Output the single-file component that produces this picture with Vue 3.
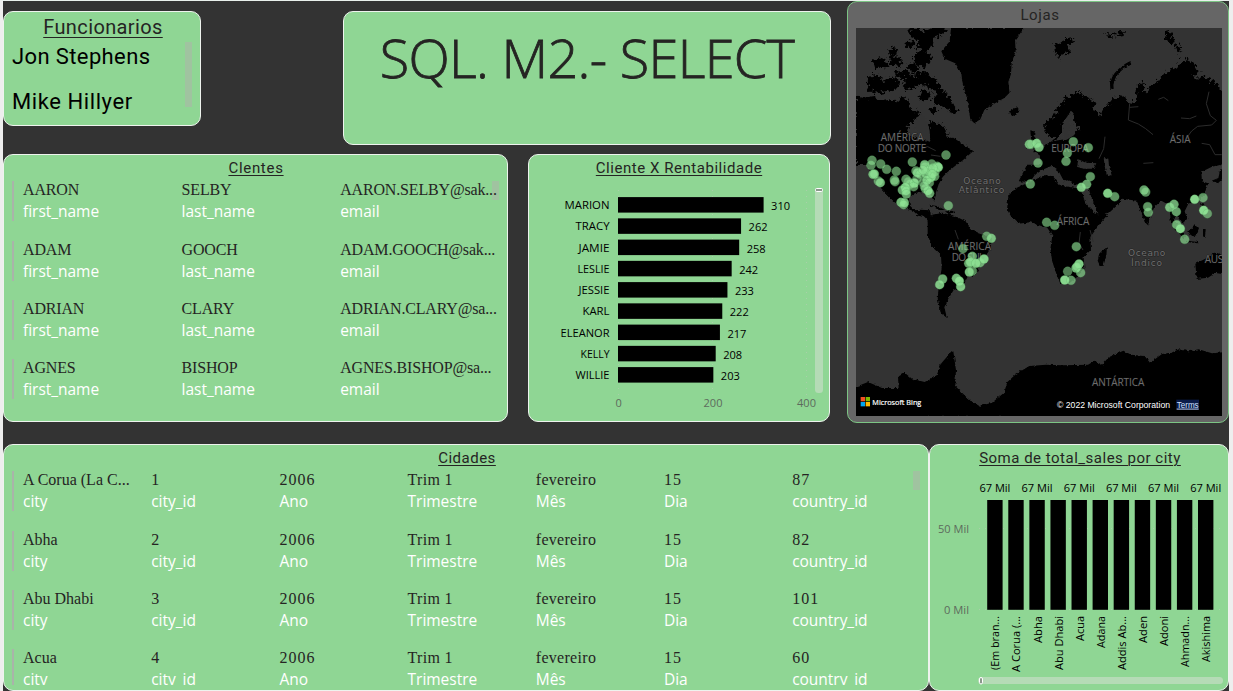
<script setup>
const clients = [
  ['AARON', 'SELBY', 'AARON.SELBY@sak...'],
  ['ADAM', 'GOOCH', 'ADAM.GOOCH@sak...'],
  ['ADRIAN', 'CLARY', 'ADRIAN.CLARY@sa...'],
  ['AGNES', 'BISHOP', 'AGNES.BISHOP@sa...'],
]
const clientFields = ['first_name', 'last_name', 'email']

const cityFields = ['city', 'city_id', 'Ano', 'Trimestre', 'Mês', 'Dia', 'country_id']
const cities = [
  ['A Corua (La C...', '1', '87'],
  ['Abha', '2', '82'],
  ['Abu Dhabi', '3', '101'],
  ['Acua', '4', '60'],
].map(([city, id, country]) => [city, id, '2006', 'Trim 1', 'fevereiro', '15', country])

// label, value, rendered width of the label
const customers = [
  ['MARION', 310, 45],
  ['TRACY', 262, 34],
  ['JAMIE', 258, 31],
  ['LESLIE', 242, 32],
  ['JESSIE', 233, 31],
  ['KARL', 222, 27],
  ['ELEANOR', 217, 49],
  ['KELLY', 208, 29],
  ['WILLIE', 203, 34],
].map(([name, value, w], i) => ({ name, value, w, y: 197.1 + i * 21.25, len: value * 0.4697 }))

const sales = [
  ['(Em bran...', 54],
  ['A Corua (...', 56],
  ['Abha', 27],
  ['Abu Dhabi', 54],
  ['Acua', 25],
  ['Adana', 32],
  ['Addis Ab...', 54],
  ['Aden', 27],
  ['Adoni', 30],
  ['Ahmadn...', 51],
  ['Akishima', 46],
].map(([name, w], i) => ({ name, w, x: 987.2 + i * 21.08, labelled: i % 2 === 0 }))

// Store positions in map units; third value is opacity
const stores = [
  [81, 481, 0.6], [78, 496, 0.6], [107, 492, 0.6], [125, 508, 0.6], [154, 514, 0.6], [202, 486, 0.6],
  [84, 523, 0.8], [88, 522, 0.8], [100, 543, 0.6], [106, 548, 0.8], [148, 540, 0.6], [150, 545, 0.6],
  [183, 538, 0.6], [213, 513, 0.6], [217, 518, 0.8], [239, 494, 0.8], [240, 500, 0.6], [260, 492, 0.6],
  [277, 499, 0.6], [280, 502, 0.9], [270, 515, 0.6], [255, 508, 0.6], [242, 520, 0.7], [226, 522, 0.6],
  [258, 532, 0.9], [269, 529, 0.6], [246, 540, 0.8], [235, 548, 0.5], [253, 548, 0.6], [208, 549, 0.9],
  [196, 552, 0.6], [190, 545, 0.5], [206, 560, 0.6], [181, 562, 0.9], [172, 570, 0.7], [183, 572, 0.8],
  [184, 582, 0.7], [241, 566, 0.6], [249, 572, 0.9], [254, 580, 0.7], [238, 558, 0.5], [168, 607, 0.8],
  [178, 608, 0.8], [176, 614, 0.6], [248, 512, 0.6], [264, 504, 0.6], [234, 510, 0.6], [262, 522, 0.6],
  [216, 536, 0.5], [303, 465, 0.6], [310, 617, 0.65], [553, 433, 0.8], [559, 433, 0.5],
  [575, 430, 0.9], [582, 442, 0.8], [579, 489, 0.65], [556, 552, 0.65], [685, 425, 0.65], [730, 443, 0.65],
  [667, 459, 0.65], [663, 484, 0.65], [736, 530, 0.65], [725, 553, 0.7], [709, 562, 0.85], [788, 580, 0.9],
  [809, 590, 0.65], [897, 570, 0.7], [902, 576, 0.6], [908, 620, 0.65], [910, 637, 0.65], [974, 622, 0.8],
  [987, 613, 0.75], [994, 635, 0.7], [1049, 598, 0.95], [1074, 593, 0.65], [1076, 631, 0.95], [1087, 641, 0.6],
  [995, 674, 0.75], [1006, 686, 0.95], [1019, 718, 0.65], [605, 667, 0.6], [629, 676, 0.6], [694, 740, 0.65],
  [693, 804, 0.8], [702, 792, 0.9], [696, 800, 0.6], [668, 814, 0.55], [707, 818, 0.65], [659, 840, 0.95],
  [678, 841, 0.65], [425, 709, 0.6], [439, 715, 0.8], [354, 746, 0.6], [382, 769, 0.7], [371, 790, 0.7],
  [376, 786, 0.8], [405, 788, 0.7], [393, 790, 0.9], [417, 777, 0.9], [382, 813, 0.6], [373, 816, 0.85],
  [293, 837, 0.75], [284, 854, 0.85], [334, 835, 0.8], [343, 843, 0.95], [347, 860, 0.85],
]
</script>

<template>
  <main class="report">
    <section class="upper">
      <div class="left">
        <div class="head-row">
          <article class="card staff">
            <h2>Funcionarios</h2>
            <div class="staff-body">
              <ul>
                <li class="n1">Jon Stephens</li>
                <li class="n2">Mike Hillyer</li>
              </ul>
              <i class="thumb"></i>
            </div>
          </article>
          <article class="card banner"><h1>SQL. M2.- SELECT</h1></article>
        </div>
        <div class="mid-row">
          <article class="card clients">
            <h3 class="t-cl">Clentes</h3>
            <div class="scroll">
              <div v-for="row in clients" :key="row[0]" class="record rec3">
                <div v-for="(v, i) in row" :key="i" class="cell">
                  <b>{{ v }}</b><span>{{ clientFields[i] }}</span>
                </div>
              </div>
              <i class="thumb"></i>
            </div>
          </article>
          <article class="card chart">
            <h3 class="t-cr">Cliente X Rentabilidade</h3>
            <svg class="plot" viewBox="529 180 300 240" width="300" height="240">
              <g class="grid">
                <path d="M618.5 190V395M712.5 190V395M806.5 190V395" />
              </g>
              <g v-for="c in customers" :key="c.name">
                <rect x="618" :y="c.y" :width="c.len" height="15.5" />
                <text :x="609.5 - c.w" :y="c.y + 12" :textLength="c.w" lengthAdjust="spacingAndGlyphs">{{ c.name }}</text>
                <text :x="618 + c.len + 7.5" :y="c.y + 13" textLength="19" lengthAdjust="spacingAndGlyphs">{{ c.value }}</text>
              </g>
              <g class="axis">
                <text x="615.5" y="407" textLength="6.5">0</text>
                <text x="703.5" y="407" textLength="19">200</text>
                <text x="797" y="407" textLength="19">400</text>
              </g>
              <rect class="track" x="815" y="188" width="8" height="205" rx="3.5" />
              <rect class="knob" x="815.5" y="188.5" width="7" height="3" rx="1" />
            </svg>
          </article>
        </div>
      </div>

      <article class="map-card">
        <h3>Lojas</h3>
        <svg class="map" viewBox="33 84 1098 1164" width="366" height="388">
          <defs>
            <filter id="coast" x="0" y="0" width="100%" height="100%">
              <feTurbulence type="fractalNoise" baseFrequency="0.11" numOctaves="3" seed="4" />
              <feDisplacementMap in="SourceGraphic" scale="10" xChannelSelector="R" yChannelSelector="G" />
            </filter>
            <filter id="fjords" x="-5%" y="-5%" width="110%" height="110%">
              <feTurbulence type="fractalNoise" baseFrequency="0.09" numOctaves="4" seed="9" />
              <feDisplacementMap in="SourceGraphic" scale="30" xChannelSelector="R" yChannelSelector="G" />
            </filter>
          </defs>
          <rect x="33" y="84" width="1098" height="1164" fill="#333" />
          <g filter="url(#fjords)">
            <!-- Arctic archipelago -->
            <path d="M190 90l30-10 15 15 30-15 40 0-15 25-25 10-5 25-22 15-20-12 8-20-25-8zM180 128l20-6 12 14-18 14zM215 160l20-10 20 12 5 22-25 18-20-8-12-20zM130 150l20-8 10 12-20 14zM78 190l22-18 22 8 12 22-24 4-20-6zM132 170l25-4 15 15-12 18-22-8zM70 232l28-8 20 16 25-8 20 14-10 22-35 8-30 6-22-18zM150 215l30-6 22 10-14 16-30-2zM185 195l25-5 15 16-20 12zM180 240l24-14 16 12-6 28-26 4-16-16zM215 220l25-4 20 14 22 20 10 22 20 16 12 28 18 20-14 6-30-20-22-4-14-20 14-12-20-22-22-10-22-6zM228 270l22 4 8 20-20 12-18-14zM250 325l20-6 10 14-16 12z" />
            <path d="M33 285l22 8 30-5 18 14 25-5 22 10 20-15 28 14-4 22 24 8 8 18-16 14-20 4-4 26 26 15 14 22 14-6 6-24 2-24 12-22 16 10 18 10 14 20 6 24 22 30-22 4-26 4-14 14 24 5-30 18H33z" />
            <!-- Northern islands of Europe and Asia -->
            <path d="M628 130l22 2 8-14 30-4-6 16-16 6 12 18-24 10-10 16-14-24zM775 105l15-6 14 6 14-8 22 0-4 8-20 4-22 2zM960 95l16-2 4 22 14 12-8 12-16-14-10-14zM992 140l12-4 8 18-14 4z" />
            <path d="M600 372l28-24 12-30 26-24 28-18 24 10 34 22-10 18 26 20 12-30 16-8 18-20 24 2 20 22 14-12 4-44 16-12 8 34 20-24 22-14 20-24 26-10 30-30 32 12 14 26-18 18 40 2 24 12 18 22 48-12V490H700l-20-60 20-40-22-50-22 24-10 44-22 12-22-20z" />
          </g>
          <g filter="url(#coast)">
            <path d="M801 266q-4-22 12-44 20-24 44-34" fill="none" stroke="#000" stroke-width="10" />
            <!-- Greenland, Iceland, British Isles -->
            <path d="M318 84l-4 40-25 30 10 22 32 14 18 30 4 32 10 30 7 40 6 36 12 12 18-12 12-28 28-18 32-18 16-16-4-32 8-24 2-34 12-34-2-34 28-36z" />
            <path d="M492 336l12-10 14-4 6 12-14 14-14-4zM556 395l14-2-4 14 10 12 10 22-20 8-6-20zM544 428l14-4 2 16-16 6z" />
            <!-- North and Central America -->
            <path d="M33 435l24 32 12 34 14 30 20 28 22 24 24 24 22 14 34 12 14 14 20 4 22 24 20-2-16-10-8-18-2-14-28-2-18 2-14-14-4-24 20-14 28-4 18 12 12 18 4-28 8-24 12-22 14-14 24-20 20-14 34-30-60-40z" />
            <path d="M252 614l24 4 24 12-18 0zM302 634l22-2 4 8-20 2z" />
            <!-- South America -->
            <path d="M248 652l14-8 28-6 40 10 32 16 14 24 24 12 42 14-6 32-22 34-22 44-24 6-16 32-26 8-16 26-12 26 8 32-18-14-10-44 4-46 8-44-2-40-26-24-14-36z" />
            <!-- Europe and Asia -->
            <path d="M546 494l44 0-6-28-20-12 28-14 28-16 50-8 80-50 391-40V490l-40 10-32 16 2 28 18 6-12 36-22 22-24 2-12 24 8 22-14 14-12-20-10-4-4 20 12 22-8 4-14-30-4-46-24-14-20 18-12 24-8 32-10-10-14-40-10-24-44-6-14 20-22 20-32 12-8-14-16-42-10-32-40-4-18-16-14 4-16-30-22-16-28 12-22 16-14 20-34-2z" />
            <!-- Africa -->
            <path d="M556 545l44-20 24 4 22 28 30 4 34 6 12 28 22 32 14 16 32-2-28 34-26 36 2 38-22 22 2 34-18 22-26 22-28 2-10-24-14-42-6-38 6-40-14-22-22-8-30-10-36 4-22-22-12-20 4-42 22-22zM762 762l8-8 16-12-2 26-8 26-12 2-6-14z" />
            <!-- Asian islands and Australia -->
            <path d="M984 665l12 6 26 40-6 4-22-24zM1030 694l20-22 12 12-8 22-14 4zM1068 610l8 0 8 22-8 2zM1100 542l20-8 6-26 5 0v30l-12 12zM1024 722l36 4-2 4-34-4zM1074 690l8 0-2 20-6-4zM1131 765l-20-8-24 16-36 18 4 46 34-4 22-14 30 4v-58z" />
            <!-- Antarctica -->
            <path d="M33 1160l36-14 42 18 50 0-2-34 20-12 22 18 38 10 36-20 14-36 26-30 10-6 8 56-2 48 40 40 32 20 38-10 36-30 10-32 26-24 40-24 50-4 50 2 76-2 20-12 22 12 20-22 44-20 24 12 40 4 16 20 36-26 28-4 22-10 30 6 30-6 40 12 71-6V1250H33z" />
          </g>
          <path fill="#000" d="M33 1175h200v73H33zM500 1175h631v73H500z" />
          <!-- Inland seas and rivers -->
          <g class="water" filter="url(#coast)">
            <path d="M700 478l22 10 32 2-8 16-30 0-20-6zM776 474l14 2 2 22 8 28-12 4-8-26zM656 366l22-34 8 8-12 40-6 38-14 6zM206 358l22-14 18 18 8 30 2 34-14-6-14-22-20-12zM708 568l10 6 40 64-8 4-30-36z" />
          </g>
          <g class="rivers">
            <path d="M854 310l-4 50 30 12 22 14 22 18M854 322l26-2M1092 275l-8 36 12 36 18 14-14 14-42 4-18 14-16 22M1070 430l24 4 16 30 20 0M1008 354l26 2 20-8M895 490l30-2M780 410l-4 36-14 30M940 298l16-6 14 10M706 696l-4 34 12 20M735 690l10 36M330 690l10 28M230 446l18-6 24 12M258 465l28 4" />
          </g>
          <g class="places">
            <text x="107" y="423" textLength="129">AMÉRICA</text>
            <text x="98" y="455" textLength="146">DO NORTE</text>
            <text x="619" y="456" textLength="112">EUROPA</text>
            <text x="974" y="428" textLength="63">ÁSIA</text>
            <text x="635" y="674" textLength="98">ÁFRICA</text>
            <text x="309" y="749" textLength="129">AMÉRICA</text>
            <text x="320" y="782" textLength="98">DO SUL</text>
            <text x="1079" y="790" textLength="56">AUS</text>
            <text x="741" y="1157" textLength="157">ANTÁRTICA</text>
          </g>
          <g class="oceans">
            <text x="355" y="551" textLength="112">Oceano</text>
            <text x="341" y="580" textLength="137">Atlântico</text>
            <text x="849" y="769" textLength="112">Oceano</text>
            <text x="858" y="798" textLength="93">Índico</text>
          </g>
          <g class="stores">
            <circle v-for="(s, i) in stores" :key="i" :cx="s[0]" :cy="s[1]" r="13.5" :fill-opacity="s[2]" />
          </g>
          <path fill="#f25022" d="M47 1191h13v13H47z" />
          <path fill="#7fba00" d="M62 1191h13v13H62z" />
          <path fill="#00a4ef" d="M47 1206h13v13H47z" />
          <path fill="#ffb900" d="M62 1206h13v13H62z" />
          <text class="bing" x="82" y="1214" textLength="147" lengthAdjust="spacingAndGlyphs">Microsoft Bing</text>
          <text class="legal" x="636" y="1223" textLength="339" lengthAdjust="spacingAndGlyphs">© 2022 Microsoft Corporation</text>
          <rect x="994" y="1199" width="68" height="30" fill="#0b1c4a" />
          <text class="legal terms" x="995" y="1223" textLength="66" lengthAdjust="spacingAndGlyphs">Terms</text>
        </svg>
      </article>
    </section>

    <section class="lower">
      <article class="card cities">
        <h3 class="t-ci">Cidades</h3>
        <div class="scroll">
          <div v-for="row in cities" :key="row[0]" class="record rec7">
            <div v-for="(v, i) in row" :key="i" class="cell" :class="{ num: i !== 0 && i !== 3 && i !== 4, name: i === 0 }">
              <b>{{ v }}</b><span>{{ cityFields[i] }}</span>
            </div>
          </div>
          <i class="thumb"></i>
        </div>
      </article>
      <article class="card chart">
        <h3 class="t-so">Soma de total_sales por city</h3>
        <svg class="plot" viewBox="930 470 298 220" width="298" height="220">
          <g class="grid"><path d="M979 528.5H1222M979 609.5H1222" /></g>
          <g v-for="s in sales" :key="s.name">
            <rect :x="s.x" y="500" width="15.4" height="109.8" />
            <text v-if="s.labelled" class="val" :x="s.x - 7.8" y="492" textLength="31" lengthAdjust="spacingAndGlyphs">67 Mil</text>
            <text :transform="`translate(${s.x + 12.2} ${616 + s.w}) rotate(-90)`" :textLength="s.w" lengthAdjust="spacingAndGlyphs">{{ s.name }}</text>
          </g>
          <g class="axis val">
            <text x="938" y="533" textLength="31" lengthAdjust="spacingAndGlyphs">50 Mil</text>
            <text x="944" y="614" textLength="25" lengthAdjust="spacingAndGlyphs">0 Mil</text>
          </g>
          <rect class="track" x="978" y="677" width="245" height="7" rx="3.5" />
          <rect class="knob" x="979.5" y="677.5" width="3" height="6.5" rx="1.5" />
        </svg>
      </article>
    </section>
  </main>
</template>

<style>
body { margin: 0; overflow: hidden; }
</style>

<style scoped>
* { box-sizing: border-box; margin: 0; padding: 0; }
.report {
  width: 1233px; height: 691px; overflow: hidden;
  border-top: 1px solid #e9f0ec; border-left: 3px solid #eee; border-right: 4px solid #eee;
  background: #333; color: #252423;
  font-family: "Open Sans", "Noto Sans", sans-serif;
  display: flex; flex-direction: column; gap: 21px;
}
.upper { display: flex; justify-content: space-between; height: 422px; }
.left { display: flex; flex-direction: column; gap: 9px; padding-top: 10px; width: 828px; }
.head-row { display: flex; justify-content: space-between; align-items: flex-start; height: 134px; }
.mid-row { display: flex; gap: 20px; height: 268px; }
.card { background: #8fd694; border: 1px solid #eef3ee; border-radius: 10px; overflow: hidden; }
h2, h3, li { font-family: Roboto, "Open Sans", sans-serif; font-weight: 400; white-space: nowrap; }
h3 { font-size: 15px; line-height: 26px; height: 25px; text-align: center; text-decoration: underline; text-underline-offset: 2px; text-decoration-thickness: 1px; }
.t-cl { letter-spacing: .7px; padding-left: 1px; }
.t-cr { letter-spacing: .54px; }
.t-ci { letter-spacing: .5px; padding-left: 2px; }
.t-so { letter-spacing: .5px; padding-left: 2px; }

.staff { width: 198px; height: 115px; }
.staff h2 { font-size: 20px; line-height: 30px; height: 30px; text-align: center; letter-spacing: .38px; padding-left: 2px; text-decoration: underline; text-underline-offset: 3px; text-decoration-thickness: 1px; }
.staff-body { display: flex; justify-content: space-between; padding: 0 8px; }
ul { list-style: none; margin-top: -8px; }
li { font-size: 22px; line-height: 45px; height: 45px; color: #000; }
.n1 { letter-spacing: .38px; }
.n2 { letter-spacing: .58px; }
.thumb { background: #a0c3a0; width: 7px; height: 19px; }
.staff .thumb { height: 65px; }

.banner { width: 488px; height: 134px; text-align: center; }
h1 { font-size: 54px; font-weight: 300; line-height: 74px; padding-top: 8px; white-space: nowrap; letter-spacing: -.7px; -webkit-text-stroke: .8px #252423; }

.clients { width: 505px; }
.cities { width: 926px; }
.mid-row .chart { width: 302px; }
.scroll { position: relative; margin: 1px 8px 0; padding-top: .3px; display: flex; flex-direction: column; gap: 19.33px; }
.clients .scroll { height: 230px; }
.cities .scroll { height: 214px; overflow: hidden; }
.scroll .thumb { position: absolute; right: 0; top: 0; z-index: 0; }
.record { display: grid; height: 40px; flex: none; border-left: 2px solid #a9b3a9; padding-left: 9px; position: relative; z-index: 1; }
.rec3 { grid-template-columns: repeat(3, 158.6px); }
.rec7 { grid-template-columns: repeat(7, 128.2px); }
.cell { display: flex; flex-direction: column; white-space: nowrap; }
.cell b { font: 400 16px/18px "Liberation Serif", serif; letter-spacing: -.17px; margin-bottom: 2px; }
.rec7 .cell b { letter-spacing: .3px; }
.rec7 .name b { letter-spacing: 0; }
.rec7 .num b { letter-spacing: 1px; }
.cell span { font-size: 15.5px; line-height: 21px; color: #fff; letter-spacing: -.02px; }

.lower { display: flex; height: 247px; }
.lower .chart { width: 300px; }
.plot { display: block; font-size: 11px; fill: #000; }
.val { font-size: 11.5px; }
.grid path { stroke: #a9cfa9; stroke-dasharray: 1 5; fill: none; }
.axis { fill: #5d6b5d; }
.track { fill: #b5dbb6; }
.knob { fill: #8b988b; stroke: #fff; }

.map-card { width: 382px; height: 422px; border: 1px solid #7cc584; border-radius: 10px; background: #666; }
.map-card h3 { text-decoration: none; line-height: 26px; height: 26px; letter-spacing: .6px; padding-left: 4px; }
.map { display: block; margin-left: 8px; }
.water { fill: #333; }
.rivers { fill: none; stroke: #2c2c2c; stroke-width: 3; }
.places { font-size: 30px; fill: #6c6c6c; stroke: #111; stroke-width: 2; paint-order: stroke; }
.oceans { font-family: "DejaVu Sans", sans-serif; font-size: 27px; fill: #707070; stroke: #222; stroke-width: 3; paint-order: stroke; }
.stores circle { fill: #8fe295; stroke: #5fae69; stroke-opacity: .6; stroke-width: 1.5; }
.bing { font-size: 23px; fill: #fff; stroke: #fff; stroke-width: .6; }
.legal { font-family: "Liberation Sans", Arial, sans-serif; font-size: 26px; fill: #fff; }
.terms { text-decoration: underline; fill: #cfe0ff; }
</style>
